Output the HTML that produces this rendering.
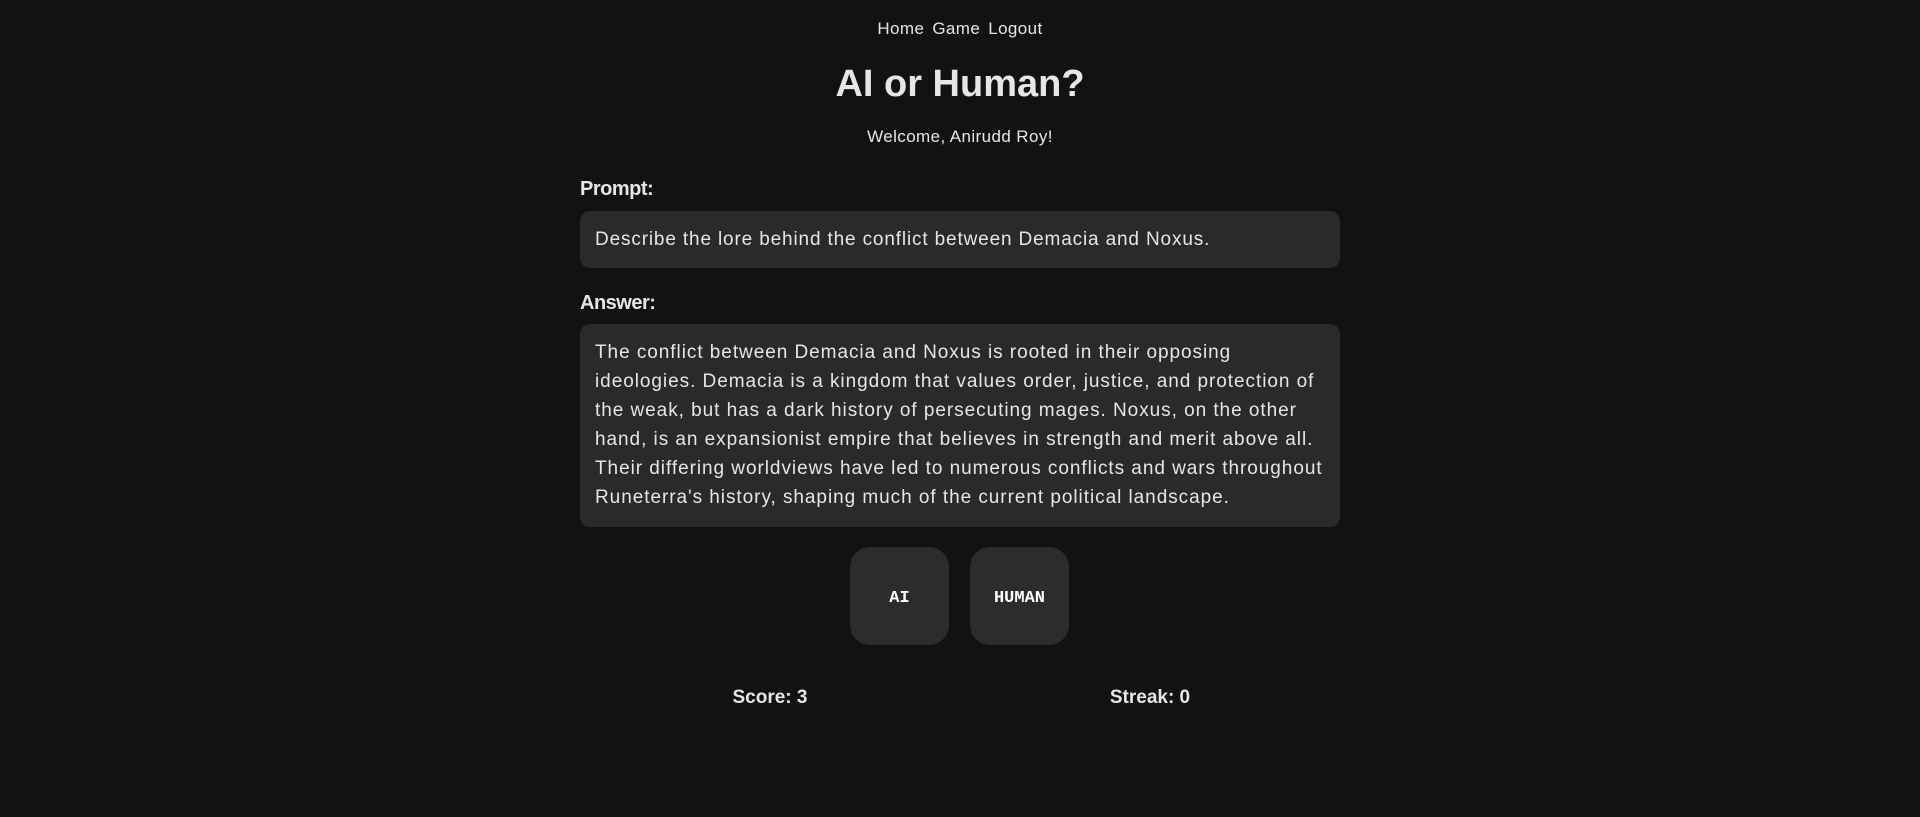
<!DOCTYPE html>
<html><head><meta charset="utf-8"><style>
html,body{margin:0;padding:0;background:#121212;width:1920px;height:817px;overflow:hidden;color:#e6e6e6;font-family:"Liberation Sans",sans-serif}
.nav{position:absolute;top:19px;left:0;width:1920px;text-align:center;font-size:17px;letter-spacing:0.4px}
.nav span{margin:0 4px}
h1{position:absolute;top:59px;left:0;width:1920px;text-align:center;margin:0;font-size:38px;font-weight:bold;line-height:50px}
.wel{position:absolute;top:127px;width:1920px;text-align:center;font-size:17px;letter-spacing:0.4px}
.lbl{position:absolute;left:580px;font-weight:bold;font-size:20px;letter-spacing:-0.5px}
.box{position:absolute;left:580px;width:730px;padding:0 15px;background:#2a2a2a;border-radius:10px;font-size:19px;line-height:29px;letter-spacing:0.85px;white-space:nowrap}
.btn{position:absolute;top:547px;width:99px;height:98px;background:#2c2c2c;border-radius:20px;color:#fff;font-family:"Liberation Mono",monospace;font-weight:bold;font-size:17px;display:flex;align-items:center;justify-content:center;padding-top:4px;box-sizing:border-box}
.st{position:absolute;top:687px;font-weight:bold;font-size:19px;width:380px;text-align:center}
</style></head><body>
<div class="nav"><span>Home</span><span>Game</span><span>Logout</span></div>
<h1>AI or Human?</h1>
<div class="wel">Welcome, Anirudd Roy!</div>
<div class="lbl" style="top:178px">Prompt:</div>
<div class="box" style="top:211px;height:57px;line-height:57px">Describe the lore behind the conflict between Demacia and Noxus.</div>
<div class="lbl" style="top:292px">Answer:</div>
<div class="box" style="top:324px;padding-top:14px;padding-bottom:15px;height:174px;letter-spacing:0.95px">The conflict between Demacia and Noxus is rooted in their opposing<br>ideologies. Demacia is a kingdom that values order, justice, and protection of<br>the weak, but has a dark history of persecuting mages. Noxus, on the other<br>hand, is an expansionist empire that believes in strength and merit above all.<br>Their differing worldviews have led to numerous conflicts and wars throughout<br>Runeterra's history, shaping much of the current political landscape.</div>
<div class="btn" style="left:850px">AI</div>
<div class="btn" style="left:970px">HUMAN</div>
<div class="st" style="left:580px">Score: 3</div>
<div class="st" style="left:960px">Streak: 0</div>
</body></html>
